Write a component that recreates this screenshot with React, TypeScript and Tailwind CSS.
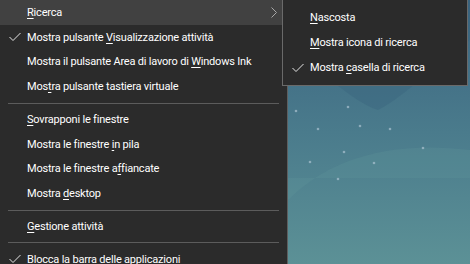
import React from "react";

const font = { fontFamily: 'Roboto, "Noto Sans", sans-serif', letterSpacing: "-0.2px" };

function Check() {
  return (
    <svg width="12" height="10" viewBox="0 0 12 10" className="block">
      <polyline points="0.5,5 4,8.5 11.5,1" fill="none" stroke="#e6e6e6" strokeWidth="1" />
    </svg>
  );
}

type Item = { kind: "item"; parts: React.ReactNode; checked?: boolean; hl?: boolean; arrow?: boolean } | { kind: "sep" };

const U = ({ c }: { c: string }) => <span className="underline underline-offset-[2px]">{c}</span>;

const items: Item[] = [
  { kind: "item", parts: <><U c="R" />icerca</>, hl: true, arrow: true },
  { kind: "item", parts: <>Mostra pulsante <U c="V" />isualizzazione attività</>, checked: true },
  { kind: "item", parts: <>Mostra il pulsante Area di lavoro di <U c="W" />indows Ink</> },
  { kind: "item", parts: <>Mos<U c="t" />ra pulsante tastiera virtuale</> },
  { kind: "sep" },
  { kind: "item", parts: <><U c="S" />ovrapponi le finestre</> },
  { kind: "item", parts: <>Mostra le finestre <U c="i" />n pila</> },
  { kind: "item", parts: <>Mostra le finestre a<U c="f" />fiancate</> },
  { kind: "item", parts: <>Mostra <U c="d" />esktop</> },
  { kind: "sep" },
  { kind: "item", parts: <><U c="G" />estione attività</> },
  { kind: "sep" },
  { kind: "item", parts: <>B<U c="l" />occa la barra delle applicazioni</>, checked: true },
];

const dots = [
  [8, 25], [60, 21], [30, 43], [102, 43], [135, 62], [22, 76], [56, 66], [86, 77], [72, 40], [50, 93],
];

export default function App() {
  return (
    <div className="relative flex h-[264px] w-[470px] overflow-hidden text-[11px] text-white" style={font}>
      <div className="flex h-full w-[288px] shrink-0 flex-col border-r border-[#5e5e5e] bg-[#2b2b2b]">
        {items.map((it, i) =>
          it.kind === "sep" ? (
            <div key={i} className="flex h-[8px] shrink-0 items-center pl-[8px] pr-[8px]">
              <div className="h-px w-full bg-[#5c5c5c]" />
            </div>
          ) : (
            <div
              key={i}
              className={`flex h-[24.75px] shrink-0 items-center ${it.hl ? "bg-[#414141]" : ""}`}
            >
              <div className="flex w-[27px] shrink-0 justify-center pl-[3px]">{it.checked ? <Check /> : null}</div>
              <div className="flex-1 whitespace-nowrap leading-none">{it.parts}</div>
              {it.arrow ? (
                <svg width="6" height="11" viewBox="0 0 6 11" className="mr-[10px]">
                  <polyline points="0.5,0.5 5.5,5.5 0.5,10.5" fill="none" stroke="#a8a8a8" strokeWidth="1" />
                </svg>
              ) : null}
            </div>
          )
        )}
      </div>
      <div className="relative flex-1 bg-gradient-to-b from-[#3b6480] via-[#4a7b8c] to-[#5c9196]">
        <svg className="absolute inset-0 h-full w-full">
          <path d="M0,60 C40,70 60,100 90,110 C120,95 150,60 182,40 L182,0 L0,0 Z" fill="#36607c" opacity="0.35" />
          <path d="M0,200 C40,160 100,140 182,150 L182,178 L0,178 Z" fill="#6aa0a0" opacity="0.18" />
          {dots.map(([x, y], i) => (
            <circle key={i} cx={x} cy={y + 86} r="1.3" fill="#a9c2d0" opacity="0.7" />
          ))}
        </svg>
      </div>
      <div className="absolute left-[282px] top-[-1px] w-[186px] border border-[#6a6a6a] bg-[#2b2b2b] py-[5px]">
        {[
          { parts: <><U c="N" />ascosta</> },
          { parts: <><U c="M" />ostra icona di ricerca</> },
          { parts: <>Mostra <U c="c" />asella di ricerca</>, checked: true },
        ].map((it, i) => (
          <div key={i} className="flex h-[25px] items-center">
            <div className="flex w-[27px] shrink-0 justify-center pl-[3px]">{it.checked ? <Check /> : null}</div>
            <div className="whitespace-nowrap leading-none">{it.parts}</div>
          </div>
        ))}
      </div>
    </div>
  );
}
